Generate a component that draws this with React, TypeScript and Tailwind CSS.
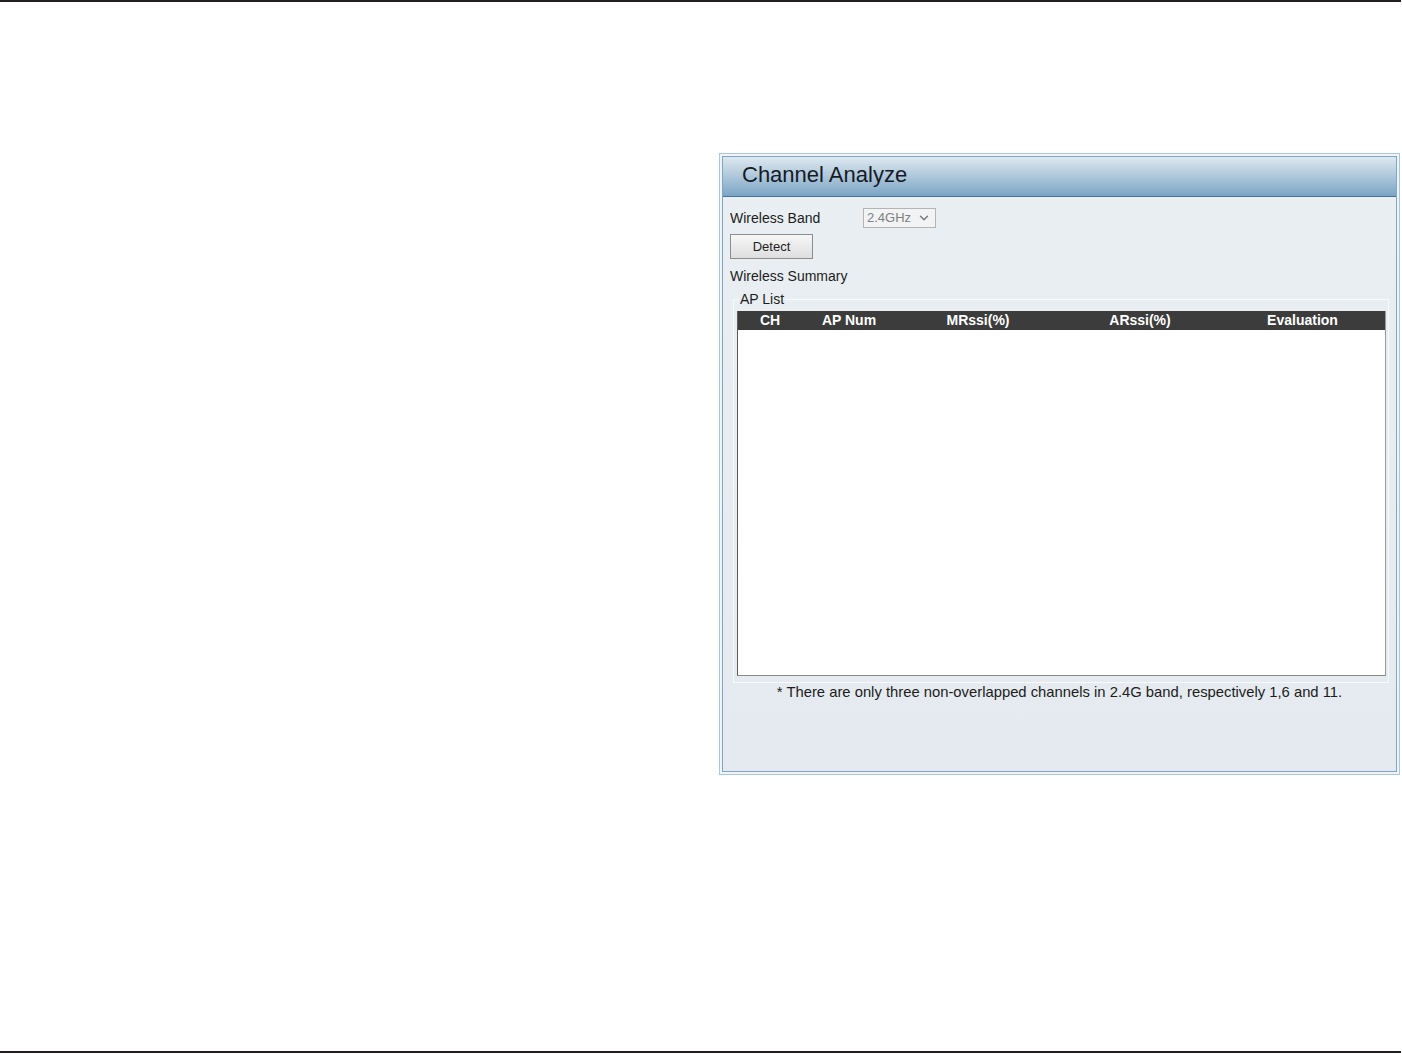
import { ChevronDown } from "lucide-react";

const columns = ["CH", "AP Num", "MRssi(%)", "ARssi(%)", "Evaluation"];

function BandSelect() {
  return (
    <div className="flex h-[20px] w-[73px] items-center justify-between border border-[#b4b4b4] bg-[#f1f3f5] pl-[3px] pr-[4px] text-[13px] text-[#808080]">
      <span>2.4GHz</span>
      <ChevronDown className="h-[14px] w-[14px] text-[#7a7a7a]" strokeWidth={2.5} />
    </div>
  );
}

function ApList() {
  return (
    <fieldset className="ml-[3px] mr-[7px] mt-[6px] border border-[#f7f9fb] pl-[3px] pr-[2px] pb-[6px] pt-[4px]">
      <legend className="ml-[2px] px-[1px] text-[14px] leading-[16px] text-[#1c1c1c]">AP List</legend>
      <div className="flex h-[365px] flex-col border-b border-l border-r border-b-[#8a8a8a] border-l-[#5c5c5c] border-r-[#9a9a9a] bg-white">
        <div className="grid h-[19px] grid-cols-[64px_94px_164px_160px_1fr] items-center bg-[#3c3c3c] text-[14px] font-bold leading-[19px] text-white">
          {columns.map((c) => (
            <div key={c} className="text-center">
              {c}
            </div>
          ))}
        </div>
        <div className="flex-1" />
      </div>
    </fieldset>
  );
}

export default function App() {
  return (
    <div className="flex h-[1054px] w-[1402px] flex-col justify-between bg-white font-['Liberation_Sans',Arial,sans-serif]">
      <div className="h-[2px] w-[1401px] bg-[#231f20]" />

      <div className="flex-1 pt-[151px]">
        <div className="ml-[719px] h-[622px] w-[681px] border border-[#a9c6dc] bg-[#f0f4f7] p-[2px]">
          <div className="flex h-full flex-col border border-[#7da5c4] bg-gradient-to-b from-[#eaeff3] to-[#e4eaef]">
            <div className="flex h-[40px] items-center border-b border-[#46759a] bg-gradient-to-b from-[#dde8f0] via-[#adc7da] to-[#7ba5c4] pb-[3px] pl-[19px]">
              <span className="text-[22px] leading-none text-[#161a26]">Channel Analyze</span>
            </div>

            <div className="flex flex-col pl-[7px] pt-[11px] text-[14px] text-[#1c1c1c]">
              <div className="flex items-center">
                <span className="w-[133px] leading-[20px]">Wireless Band</span>
                <BandSelect />
              </div>
              <button className="mt-[6px] flex h-[25px] w-[83px] items-center justify-center border border-[#8c8c8c] bg-gradient-to-b from-[#f7f7f7] to-[#dedede] text-[13px] text-[#222]">
                Detect
              </button>
              <div className="mt-[8px] leading-[18px]">Wireless Summary</div>
              <ApList />
            </div>

            <div className="text-center text-[14.8px] leading-[18px] text-[#1c1c1c]">
              * There are only three non-overlapped channels in 2.4G band, respectively 1,6 and 11.
            </div>
          </div>
        </div>
      </div>

      <div className="mb-[1px] h-[2px] w-[1401px] bg-[#231f20]" />
    </div>
  );
}
